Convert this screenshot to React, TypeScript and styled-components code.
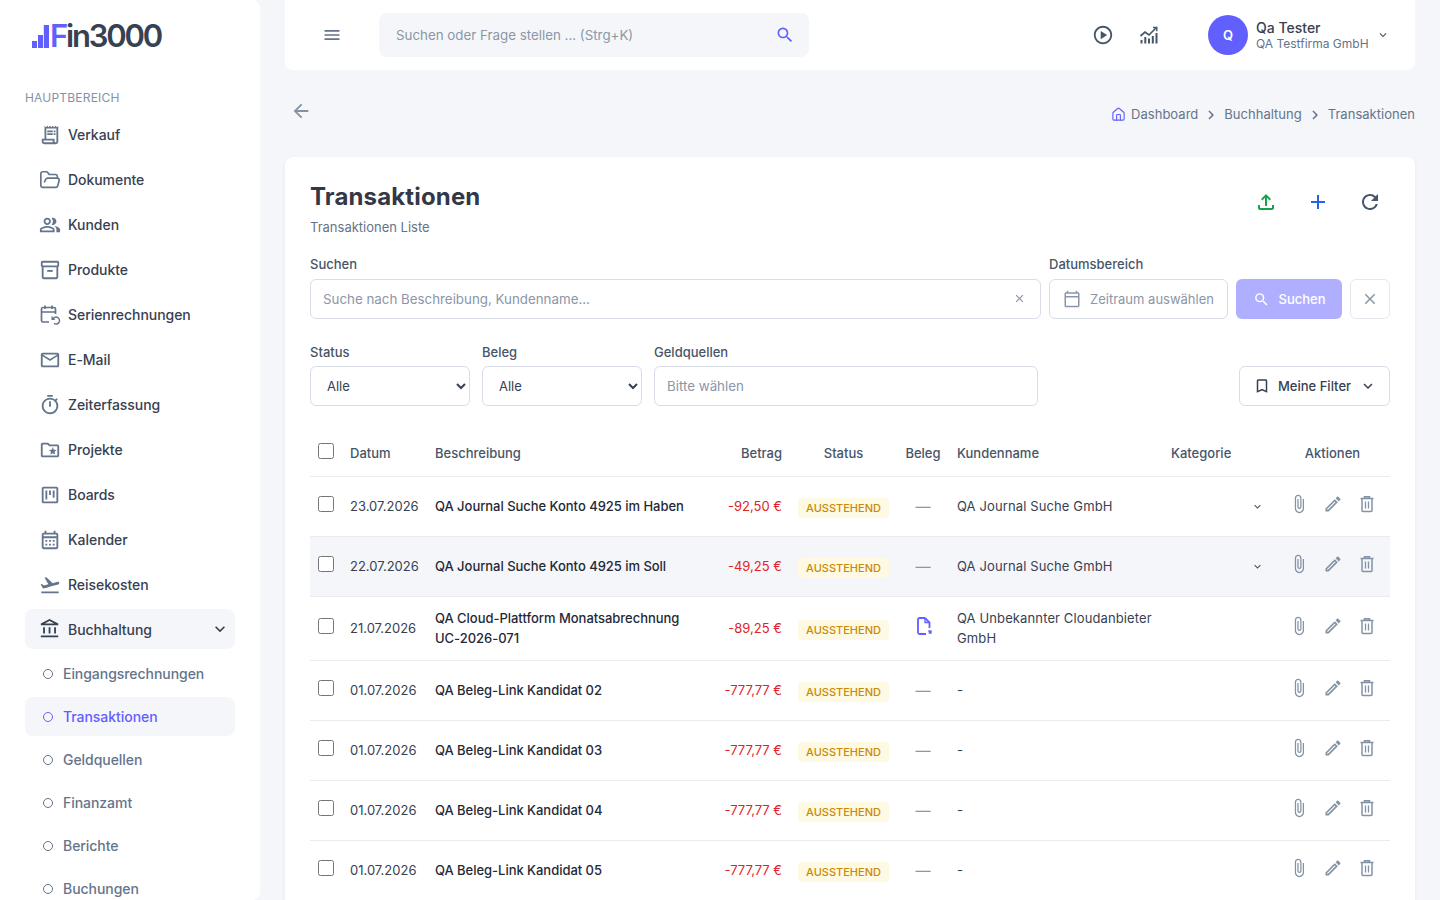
import styled, { createGlobalStyle } from 'styled-components';
import type { ReactNode } from 'react';
import { FolderOpen, House } from 'lucide-react';
import {
  MdOutlineReceiptLong,
  MdOutlinePeopleAlt,
  MdOutlineInventory2,
  MdOutlineEmail,
  MdOutlineTimer,
  MdOutlineFolderSpecial,
  MdOutlineViewKanban,
  MdOutlineCalendarMonth,
  MdFlightTakeoff,
  MdOutlineAccountBalance,
  MdKeyboardArrowDown,
  MdMenu,
  MdSearch,
  MdOutlinePlayCircle,
  MdArrowBack,
  MdChevronRight,
  MdOutlineFileUpload,
  MdAdd,
  MdRefresh,
  MdClose,
  MdOutlineCalendarToday,
  MdOutlineBookmarkBorder,
  MdOutlineAttachFile,
  MdOutlineEdit,
} from 'react-icons/md';

const GlobalStyle = createGlobalStyle`
  * { box-sizing: border-box; }
  html, body { margin: 0; height: 100%; overflow: hidden; }
  body {
    background: #f5f6f9;
    color: #374151;
    font-family: Inter, "Noto Sans", sans-serif;
    font-size: 14px;
  }
`;

function SeriesIcon() {
  return (
    <svg width="22" height="22" viewBox="0 0 22 22" fill="none" stroke="currentColor" strokeWidth="1.7">
      <path d="M10 18H4a1.500 1.500 0 0 1-1.500-1.500V5A1.500 1.500 0 0 1 4 3.500h11A1.500 1.500 0 0 1 16.500 5v5" />
      <path d="M2.500 8h14M6 1.500v3.500M13 1.500v3.500" />
      <path d="M14 14.800a3.500 3.500 0 1 1 1 4.600" strokeWidth="1.400" />
      <path d="M13.200 12.600v2.600h2.600" strokeWidth="1.400" />
    </svg>
  );
}

function TrendIcon() {
  return (
    <svg width="20" height="20" viewBox="0 0 20 20" fill="none" stroke="currentColor">
      <path d="M1.500 11 6 7l4 3 7-7" strokeWidth="1.700" />
      <path d="M14 2.500h3.800v3.800" strokeWidth="1.400" />
      <path d="M2.500 15v3.500M6.300 12v6.500M10 13.500v5M13.800 11v7.500M17.500 8v10.500" strokeWidth="2" />
    </svg>
  );
}

function LogoBars() {
  return (
    <LogoMark width="17" height="23" viewBox="0 0 17 23" fill="#6160ff">
      <rect x="0" y="16" width="5" height="7" />
      <rect x="6" y="10" width="5" height="13" />
      <rect x="11.800" y="0" width="5.200" height="23" />
    </LogoMark>
  );
}

function ReceiptFileIcon() {
  return (
    <svg width="20" height="20" viewBox="0 0 20 20" fill="none" stroke="currentColor" strokeWidth="1.800">
      <path d="M11 2H5.500A1.500 1.500 0 0 0 4 3.500v13A1.500 1.500 0 0 0 5.500 18H12" />
      <path d="M11 2l4.500 4.500V12" />
      <path d="M11 2v4.500h4.500" strokeWidth="1.300" />
      <path d="M14.500 14.500l3 3M17.500 14.500l-2.500 3" strokeWidth="1.700" />
    </svg>
  );
}

function TrashIcon() {
  return (
    <svg width="20" height="20" viewBox="0 0 20 20" fill="none" stroke="currentColor" strokeWidth="1.500">
      <path d="M3.500 4.500h13M7.500 4.500V2.800h5v1.700" />
      <path d="M5 4.500v12a1 1 0 0 0 1 1h8a1 1 0 0 0 1-1v-12" />
      <path d="M8.500 7.500v7M11.500 7.500v7" strokeWidth="1.300" />
    </svg>
  );
}

const mainItems: { label: string; icon: ReactNode }[] = [
  { label: 'Verkauf', icon: <MdOutlineReceiptLong /> },
  { label: 'Dokumente', icon: <FolderOpen strokeWidth={1.8} /> },
  { label: 'Kunden', icon: <MdOutlinePeopleAlt /> },
  { label: 'Produkte', icon: <MdOutlineInventory2 /> },
  { label: 'Serienrechnungen', icon: <SeriesIcon /> },
  { label: 'E-Mail', icon: <MdOutlineEmail /> },
  { label: 'Zeiterfassung', icon: <MdOutlineTimer /> },
  { label: 'Projekte', icon: <MdOutlineFolderSpecial /> },
  { label: 'Boards', icon: <MdOutlineViewKanban /> },
  { label: 'Kalender', icon: <MdOutlineCalendarMonth /> },
  { label: 'Reisekosten', icon: <MdFlightTakeoff /> },
];

const subItems = ['Eingangsrechnungen', 'Transaktionen', 'Geldquellen', 'Finanzamt', 'Berichte', 'Buchungen'];

type Tx = {
  date: string;
  title: ReactNode;
  amount: string;
  customer: ReactNode;
  expand?: boolean;
  file?: boolean;
  tall?: boolean;
  striped?: boolean;
};

const rows: Tx[] = [
  { date: '23.07.2026', title: 'QA Journal Suche Konto 4925 im Haben', amount: '-92,50 €', customer: 'QA Journal Suche GmbH', expand: true },
  { date: '22.07.2026', title: 'QA Journal Suche Konto 4925 im Soll', amount: '-49,25 €', customer: 'QA Journal Suche GmbH', expand: true, striped: true },
  {
    date: '21.07.2026',
    title: 'QA Cloud-Plattform Monatsabrechnung UC-2026-071',
    amount: '-89,25 €',
    customer: 'QA Unbekannter Cloudanbieter GmbH',
    file: true,
    tall: true,
  },
  { date: '01.07.2026', title: 'QA Beleg-Link Kandidat 02', amount: '-777,77 €', customer: '-' },
  { date: '01.07.2026', title: 'QA Beleg-Link Kandidat 03', amount: '-777,77 €', customer: '-' },
  { date: '01.07.2026', title: 'QA Beleg-Link Kandidat 04', amount: '-777,77 €', customer: '-' },
  { date: '01.07.2026', title: 'QA Beleg-Link Kandidat 05', amount: '-777,77 €', customer: '-' },
];

export default function App() {
  return (
    <>
      <GlobalStyle />
      <Shell>
        <Sidebar>
          <Logo>
            <LogoBars />
            <LogoText>
              <b>F</b>in3000
            </LogoText>
          </Logo>
          <SectionLabel>Hauptbereich</SectionLabel>
          {mainItems.map((item) => (
            <NavItem key={item.label}>
              <NavIcon>{item.icon}</NavIcon>
              {item.label}
            </NavItem>
          ))}
          <NavGroup>
            <NavIcon>
              <MdOutlineAccountBalance />
            </NavIcon>
            Buchhaltung
            <GroupArrow>
              <MdKeyboardArrowDown />
            </GroupArrow>
          </NavGroup>
          <SubList>
            {subItems.map((item) => (
              <SubItem key={item} $active={item === 'Transaktionen'}>
                <Dot />
                {item}
              </SubItem>
            ))}
          </SubList>
        </Sidebar>

        <Main>
          <TopBar>
            <MenuButton>
              <MdMenu />
            </MenuButton>
            <GlobalSearch>
              <input placeholder="Suchen oder Frage stellen ... (Strg+K)" />
              <MdSearch />
            </GlobalSearch>
            <TopActions>
              <TopIcon>
                <MdOutlinePlayCircle />
              </TopIcon>
              <TopIcon>
                <TrendIcon />
              </TopIcon>
            </TopActions>
            <UserBox>
              <Avatar>Q</Avatar>
              <UserText>
                <strong>Qa Tester</strong>
                <span>QA Testfirma GmbH</span>
              </UserText>
              <UserArrow>
                <MdKeyboardArrowDown />
              </UserArrow>
            </UserBox>
          </TopBar>

          <CrumbRow>
            <BackLink>
              <MdArrowBack />
            </BackLink>
            <Crumbs>
              <House className="home" strokeWidth={1.8} />
              Dashboard
              <MdChevronRight />
              Buchhaltung
              <MdChevronRight />
              Transaktionen
            </Crumbs>
          </CrumbRow>

          <Card>
            <CardHead>
              <div>
                <Title>Transaktionen</Title>
                <Subtitle>Transaktionen Liste</Subtitle>
              </div>
              <HeadActions>
                <HeadIcon $color="#16a34a">
                  <MdOutlineFileUpload />
                </HeadIcon>
                <HeadIcon $color="#2563eb">
                  <MdAdd />
                </HeadIcon>
                <HeadIcon $color="#475569">
                  <MdRefresh />
                </HeadIcon>
              </HeadActions>
            </CardHead>

            <SearchRow>
              <Field>
                <FieldLabel>Suchen</FieldLabel>
                <InputWrap>
                  <TextInput placeholder="Suche nach Beschreibung, Kundenname..." />
                  <ClearIcon>
                    <MdClose />
                  </ClearIcon>
                </InputWrap>
              </Field>
              <Field>
                <FieldLabel>Datumsbereich</FieldLabel>
                <DateBox>
                  <MdOutlineCalendarToday />
                  Zeitraum auswählen
                </DateBox>
              </Field>
              <SearchButton>
                <MdSearch />
                Suchen
              </SearchButton>
              <ResetButton>
                <MdClose />
              </ResetButton>
            </SearchRow>

            <FilterRow>
              <Field>
                <FilterLabel>Status</FilterLabel>
                <Select $width={160}>
                  <option>Alle</option>
                </Select>
              </Field>
              <Field>
                <FilterLabel>Beleg</FilterLabel>
                <Select $width={160}>
                  <option>Alle</option>
                </Select>
              </Field>
              <MoneyField>
                <FilterLabel>Geldquellen</FilterLabel>
                <TextInput placeholder="Bitte wählen" />
              </MoneyField>
              <FilterButton>
                <MdOutlineBookmarkBorder className="mark" />
                Meine Filter
                <MdKeyboardArrowDown className="arrow" />
              </FilterButton>
            </FilterRow>

            <Table>
              <colgroup>
                <col width="32" />
                <col width="85" />
                <col width="287" />
                <col width="76" />
                <col width="107" />
                <col width="52" />
                <col width="214" />
                <col width="112" />
                <col width="115" />
              </colgroup>
              <thead>
                <tr>
                  <Th $align="center">
                    <Check type="checkbox" />
                  </Th>
                  <Th>Datum</Th>
                  <Th>Beschreibung</Th>
                  <Th $align="right">Betrag</Th>
                  <Th $align="center">Status</Th>
                  <Th $align="center">Beleg</Th>
                  <Th>Kundenname</Th>
                  <Th>Kategorie</Th>
                  <Th $align="center">Aktionen</Th>
                </tr>
              </thead>
              <tbody>
                {rows.map((row, i) => (
                  <Row key={i} $striped={row.striped} $tall={row.tall}>
                    <Td $align="center">
                      <Check type="checkbox" />
                    </Td>
                    <Td>{row.date}</Td>
                    <TitleCell>{row.title}</TitleCell>
                    <AmountCell>{row.amount}</AmountCell>
                    <Td $align="center">
                      <Badge>AUSSTEHEND</Badge>
                    </Td>
                    <Td $align="center">
                      {row.file ? (
                        <FileLink>
                          <ReceiptFileIcon />
                        </FileLink>
                      ) : (
                        <NoFile>—</NoFile>
                      )}
                    </Td>
                    <CustomerCell>{row.customer}</CustomerCell>
                    <CategoryCell>{row.expand && <MdKeyboardArrowDown />}</CategoryCell>
                    <Td>
                      <RowActions>
                        <MdOutlineAttachFile />
                        <MdOutlineEdit />
                        <TrashIcon />
                      </RowActions>
                    </Td>
                  </Row>
                ))}
              </tbody>
            </Table>
          </Card>
        </Main>
      </Shell>
    </>
  );
}

const Shell = styled.div`
  display: flex;
  height: 900px;
  overflow: hidden;
`;

const Sidebar = styled.aside`
  width: 260px;
  flex: none;
  height: 900px;
  padding: 0 25px;
  background: #fff;
  border-radius: 0 8px 8px 0;
  overflow: hidden;
`;

const Logo = styled.div`
  display: flex;
  align-items: flex-end;
  height: 54px;
  padding-left: 7px;
`;

const LogoMark = styled.svg`
  flex: none;
  margin: 0 1px 6px 0;
`;

const LogoText = styled.span`
  font-size: 31px;
  line-height: 36px;
  font-weight: 600;
  letter-spacing: -2.2px;
  color: #374151;
  b {
    font-weight: 600;
    color: #6160ff;
  }
`;

const SectionLabel = styled.div`
  margin: 36px 0 6px;
  height: 16px;
  font-size: 12px;
  line-height: 16px;
  letter-spacing: 0.2px;
  text-transform: uppercase;
  color: #8492a6;
`;

const NavItem = styled.div`
  display: flex;
  align-items: center;
  height: 45px;
  padding-left: 14px;
  gap: 8px;
  font-size: 14px;
  font-weight: 450;
  letter-spacing: -0.05px;
  color: #374151;
`;

const NavIcon = styled.span`
  display: flex;
  align-items: center;
  justify-content: center;
  width: 21px;
  color: #64748b;
  svg {
    width: 22px;
    height: 22px;
    flex: none;
  }
`;

const NavGroup = styled(NavItem)`
  height: 40px;
  margin-top: 2px;
  background: #f5f6f9;
  border-radius: 8px;
  ${NavIcon} {
    color: #374151;
  }
`;

const GroupArrow = styled.span`
  display: flex;
  margin-left: auto;
  margin-right: 5px;
  font-size: 20px;
`;

const SubList = styled.div`
  display: flex;
  flex-direction: column;
  gap: 4px;
  margin-top: 5px;
`;

const SubItem = styled.div<{ $active?: boolean }>`
  display: flex;
  align-items: center;
  gap: 10px;
  height: 39px;
  padding-left: 18px;
  border-radius: 8px;
  font-size: 14px;
  font-weight: 450;
  letter-spacing: -0.05px;
  color: ${(p) => (p.$active ? '#6160ff' : '#64748b')};
  background: ${(p) => (p.$active ? '#f5f6f9' : 'transparent')};
`;

const Dot = styled.span`
  width: 10px;
  height: 10px;
  border: 1px solid currentColor;
  border-radius: 50%;
`;

const Main = styled.main`
  flex: 1;
  min-width: 0;
  padding: 0 25px;
`;

const TopBar = styled.header`
  display: flex;
  align-items: center;
  height: 70px;
  padding: 0 25px 0 37px;
  background: #fff;
  border-radius: 0 0 8px 8px;
`;

const MenuButton = styled.span`
  display: flex;
  font-size: 20px;
  color: #64748b;
`;

const GlobalSearch = styled.div`
  display: flex;
  align-items: center;
  width: 430px;
  height: 44px;
  margin-left: 37px;
  padding: 0 14px 0 17px;
  background: #f5f6f9;
  border-radius: 8px;
  input {
    flex: 1;
    padding: 0;
    border: 0;
    outline: 0;
    background: transparent;
    font: 400 13.333px Inter, sans-serif;
    color: #374151;
  }
  input::placeholder {
    color: #8b96a8;
  }
  svg {
    font-size: 20px;
    color: #6160ff;
  }
`;

const TopActions = styled.div`
  display: flex;
  gap: 24px;
  margin-left: 283px;
`;

const TopIcon = styled.span`
  display: flex;
  align-items: center;
  justify-content: center;
  width: 22px;
  height: 22px;
  font-size: 22px;
  color: #475569;
`;

const UserBox = styled.div`
  display: flex;
  align-items: center;
  margin-left: 48px;
  flex: 1;
`;

const Avatar = styled.div`
  display: flex;
  align-items: center;
  justify-content: center;
  width: 40px;
  height: 40px;
  border-radius: 50%;
  background: #6160ff;
  color: #fff;
  font-size: 13px;
  font-weight: 600;
`;

const UserText = styled.div`
  display: flex;
  flex-direction: column;
  margin-left: 8px;
  padding-top: 2px;
  strong {
    font-size: 14px;
    line-height: 16px;
    font-weight: 500;
    color: #374151;
  }
  span {
    font-size: 12px;
    line-height: 16px;
    color: #64748b;
  }
`;

const UserArrow = styled.span`
  display: flex;
  margin-left: auto;
  font-size: 14px;
  color: #475569;
`;

const CrumbRow = styled.div`
  display: flex;
  align-items: center;
  justify-content: space-between;
  height: 87px;
`;

const BackLink = styled.span`
  display: flex;
  margin: -6px 0 0 5px;
  font-size: 22px;
  color: #8492a6;
`;

const Crumbs = styled.nav`
  display: flex;
  align-items: center;
  margin-top: 1px;
  font-size: 13px;
  letter-spacing: 0.02px;
  color: #64748b;
  svg {
    font-size: 18px;
    margin: 1px 4px 0;
  }
  .home {
    width: 15px;
    height: 15px;
    margin: 0 5px 0 0;
    color: #6160ff;
  }
`;

const Card = styled.section`
  padding: 25px;
  background: #fff;
  border-radius: 8px;
  box-shadow: 0 1px 4px rgba(15, 23, 42, 0.05);
`;

const CardHead = styled.div`
  display: flex;
  justify-content: space-between;
  align-items: flex-start;
  margin-bottom: 19px;
`;

const Title = styled.h1`
  margin: 0;
  font-size: 24px;
  line-height: 30px;
  font-weight: 700;
  letter-spacing: 0.15px;
  color: #333848;
`;

const Subtitle = styled.p`
  margin: 5px 0 0;
  font-size: 13px;
  line-height: 20px;
  color: #64748b;
`;

const HeadActions = styled.div`
  display: flex;
  gap: 28px;
  padding-top: 8px;
  margin-right: 8px;
`;

const HeadIcon = styled.span<{ $color: string }>`
  display: flex;
  font-size: 24px;
  color: ${(p) => p.$color};
`;

const SearchRow = styled.div`
  display: flex;
  align-items: flex-end;
  gap: 8px;
`;

const Field = styled.label`
  display: block;
  &:first-child {
    flex: 1;
  }
`;

const FieldLabel = styled.div`
  margin-bottom: 7px;
  font-size: 13px;
  line-height: 16px;
  font-weight: 500;
  color: #475569;
`;

const FilterLabel = styled(FieldLabel)`
  margin-bottom: 6px;
`;

const InputWrap = styled.div`
  position: relative;
`;

const TextInput = styled.input`
  display: block;
  width: 100%;
  height: 40px;
  padding: 0 12px;
  border: 1px solid #d9dde8;
  border-radius: 6px;
  outline: 0;
  background: #fff;
  font: 400 13.333px Inter, sans-serif;
  &::placeholder {
    color: #8b96a8;
  }
`;

const ClearIcon = styled.span`
  position: absolute;
  top: 13px;
  right: 15px;
  display: flex;
  font-size: 13px;
  color: #8492a6;
`;

const DateBox = styled.div`
  display: flex;
  align-items: center;
  gap: 9px;
  width: 179px;
  height: 40px;
  padding: 0 0 1px 13px;
  border: 1px solid #d9dde8;
  border-radius: 6px;
  font-size: 13px;
  color: #8b96a8;
  white-space: nowrap;
  svg {
    font-size: 18px;
    flex: none;
  }
`;

const SearchButton = styled.button`
  display: flex;
  align-items: center;
  justify-content: center;
  gap: 9px;
  width: 106px;
  height: 40px;
  border: 0;
  border-radius: 6px;
  background: #b0afff;
  color: #fff;
  font: 500 13px Inter, sans-serif;
  svg {
    font-size: 17px;
  }
`;

const ResetButton = styled.button`
  display: flex;
  align-items: center;
  justify-content: center;
  width: 40px;
  height: 40px;
  padding: 0;
  border: 1px solid #e6e8ef;
  border-radius: 6px;
  background: #fff;
  color: #8b96a8;
  font-size: 18px;
`;

const FilterRow = styled.div`
  display: flex;
  align-items: flex-end;
  gap: 12px;
  margin-top: 25px;
  ${Field}:first-child {
    flex: none;
  }
`;

const MoneyField = styled(Field)`
  width: 384px;
`;

const Select = styled.select<{ $width: number }>`
  display: block;
  width: ${(p) => p.$width}px;
  height: 40px;
  padding: 0 12px;
  border: 1px solid #d9dde8;
  border-radius: 6px;
  outline: 0;
  background: #fff;
  color: #374151;
  font: 400 13px Inter, sans-serif;
`;

const FilterButton = styled.button`
  display: flex;
  align-items: center;
  width: 151px;
  height: 40px;
  margin-left: auto;
  padding: 0 14px 0 13px;
  border: 1px solid #d9dde8;
  border-radius: 6px;
  background: #fff;
  color: #374151;
  font: 500 13px Inter, sans-serif;
  white-space: nowrap;
  .mark {
    font-size: 18px;
    margin-right: 7px;
  }
  .arrow {
    font-size: 18px;
    margin-left: auto;
    margin-right: -2px;
  }
`;

const Table = styled.table`
  width: 1080px;
  margin-top: 24px;
  table-layout: fixed;
  border-collapse: collapse;
`;

const Th = styled.th<{ $align?: string }>`
  height: 46px;
  padding: 0 8px;
  border-bottom: 1px solid #e9ebf1;
  text-align: ${(p) => p.$align ?? 'left'};
  font-size: 13px;
  font-weight: 500;
  color: #475569;
  white-space: nowrap;
`;

const Row = styled.tr<{ $striped?: boolean; $tall?: boolean }>`
  height: ${(p) => (p.$tall ? 64 : 60)}px;
  background: ${(p) => (p.$striped ? '#f5f6f9' : 'transparent')};
`;

const Td = styled.td<{ $align?: string }>`
  padding: 0 8px;
  border-bottom: 1px solid #e9ebf1;
  text-align: ${(p) => p.$align ?? 'left'};
  font-size: 13px;
  line-height: 20px;
  color: #374151;
`;

const TitleCell = styled(Td)`
  font-weight: 500;
  letter-spacing: -0.03px;
  color: #1f2937;
`;

const CustomerCell = styled(Td)`
  letter-spacing: 0.12px;
`;

const AmountCell = styled(Td)`
  text-align: right;
  color: #dc2626;
  white-space: nowrap;
`;

const CategoryCell = styled(Td)`
  text-align: right;
  padding-right: 11px;
  svg {
    display: inline-block;
    font-size: 13px;
    vertical-align: middle;
    margin-top: -2px;
    color: #475569;
  }
`;

const Check = styled.input`
  display: block;
  width: 16px;
  height: 16px;
  margin: -4px auto 0;
`;

const Badge = styled.span`
  display: inline-block;
  margin-top: 4px;
  padding: 0 8px;
  height: 20px;
  line-height: 20px;
  border-radius: 4px;
  background: #fef9e3;
  color: #ca8a04;
  font-size: 11px;
  font-weight: 500;
`;

const NoFile = styled.span`
  position: relative;
  top: 1px;
  font-size: 15px;
  color: #8b96a8;
`;

const FileLink = styled.span`
  display: flex;
  justify-content: center;
  margin: -4px 0 0 1px;
  color: #6160ff;
`;

const RowActions = styled.div`
  display: flex;
  justify-content: space-between;
  margin-top: -4px;
  padding: 0 5px 0 6px;
  color: #8492a6;
  font-size: 20px;
`;
